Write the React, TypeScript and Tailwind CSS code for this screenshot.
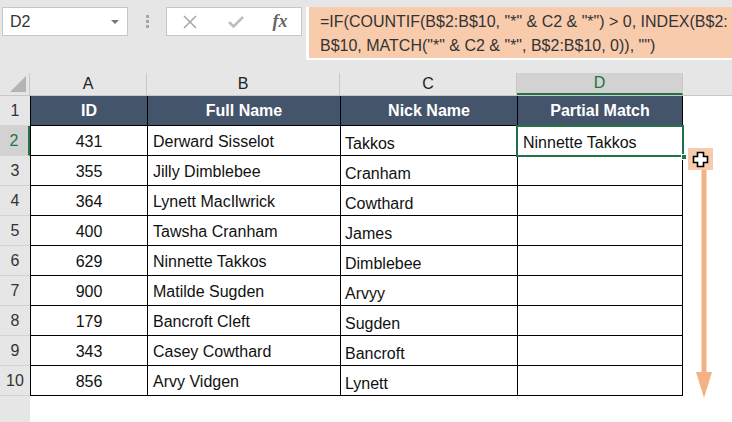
import React from 'react'

// Excel 風のシート。部分一致の数式結果を D 列に表示する
const COLS = [
  { key: 'A', w: 'w-[117px]' },
  { key: 'B', w: 'w-[193px]' },
  { key: 'C', w: 'w-[177px]' },
  { key: 'D', w: 'w-[166px]' },
]

const ROWS: [string, string, string, string][] = [
  ['431', 'Derward Sisselot', 'Takkos', 'Ninnette Takkos'],
  ['355', 'Jilly Dimblebee', 'Cranham', ''],
  ['364', 'Lynett MacIlwrick', 'Cowthard', ''],
  ['400', 'Tawsha Cranham', 'James', ''],
  ['629', 'Ninnette Takkos', 'Dimblebee', ''],
  ['900', 'Matilde Sugden', 'Arvyy', ''],
  ['179', 'Bancroft Cleft', 'Sugden', ''],
  ['343', 'Casey Cowthard', 'Bancroft', ''],
  ['856', 'Arvy Vidgen', 'Lynett', ''],
]

const FONT = "font-['Liberation_Sans','Noto_Sans',sans-serif]"

const FillCursor: React.FC = () => (
  <svg width="17" height="17" viewBox="0 0 17 17">
    <path
      d="M5.5 1.5h6v4h4v6h-4v4h-6v-4h-4v-6h4z"
      fill="#fff"
      stroke="#000"
      strokeWidth="1.6"
    />
  </svg>
)

const DownArrow: React.FC = () => (
  <svg width="18" height="228" viewBox="0 0 18 228">
    <rect x="6.5" y="0" width="5" height="206" fill="#f4b183" />
    <polygon points="1,202 17,202 9,228" fill="#f4b183" />
  </svg>
)

export default function App() {
  return (
    <div className={`relative w-[732px] h-[422px] overflow-hidden bg-[#e6e6e6] text-[#222] ${FONT}`}>
      {/* formula bar */}
      <div className="flex items-start pt-[7px] h-[73px]">
        <div className="ml-[2px] w-[126px] h-[29px] bg-white border border-[#c6c6c6] flex items-center justify-between pl-[7px] pr-[8px]">
          <span className="text-[16px] text-[#333]">D2</span>
          <span className="w-0 h-0 border-l-[4px] border-r-[4px] border-t-[4px] border-l-transparent border-r-transparent border-t-[#777]" />
        </div>
        <div className="w-[38px] h-[29px] flex flex-col items-center justify-center gap-[2px]">
          <span className="w-[3px] h-[3px] bg-[#a6a6a6]" />
          <span className="w-[3px] h-[3px] bg-[#a6a6a6]" />
          <span className="w-[3px] h-[3px] bg-[#a6a6a6]" />
        </div>
        <div className="w-[136px] h-[29px] bg-white border border-[#c6c6c6] flex items-center">
          <span className="w-[46px] flex justify-center">
            <svg width="14" height="14" viewBox="0 0 14 14">
              <path d="M1 1L13 13M13 1L1 13" stroke="#a6a6a6" strokeWidth="1.5" />
            </svg>
          </span>
          <span className="w-[46px] flex justify-center">
            <svg width="16" height="12" viewBox="0 0 16 12">
              <path d="M1 6L5.5 10.5L15 1" stroke="#bdbdbd" strokeWidth="2.6" fill="none" />
            </svg>
          </span>
          <span className="flex-1 text-center text-[18px] italic font-bold text-[#666] font-['Liberation_Serif',serif]">fx</span>
        </div>
        <div className="ml-[4px] flex-1 h-[53px] bg-white pl-[3px] pb-[2px]">
          <div className="h-full bg-[#f8cbad] pl-[11px] pt-[3px] text-[16px] leading-[24px] text-[#333] whitespace-nowrap">
            <div>=IF(COUNTIF(B$2:B$10, "*" &amp; C2 &amp; "*") &gt; 0, INDEX(B$2:</div>
            <div>B$10, MATCH("*" &amp; C2 &amp; "*", B$2:B$10, 0)), "")</div>
          </div>
        </div>
      </div>

      {/* column headers */}
      <div className="flex h-[23px] border-b border-[#c8c8c8]">
        <div className="w-[30px] flex items-end justify-end pr-[3px] pb-[3px] border-r border-[#c8c8c8]">
          <svg width="16" height="16" viewBox="0 0 16 16">
            <polygon points="16,0 16,16 0,16" fill="#b4b4b4" />
          </svg>
        </div>
        {COLS.map(c => (
          <div
            key={c.key}
            className={`${c.w} flex items-center justify-center text-[16px] border-r border-[#c8c8c8] ${
              c.key === 'D' ? 'bg-[#d2d2d2] text-[#217346] border-b-2 border-b-[#217346]' : 'text-[#222]'
            }`}
          >
            {c.key}
          </div>
        ))}
        <div className="flex-1" />
      </div>

      {/* sheet body */}
      <div className="flex flex-col">
        {/* row 1: table header */}
        <div className="flex h-[30px]">
          <div className="w-[30px] flex items-center justify-center text-[16px] text-[#333] border-b border-[#d4d4d4]">1</div>
          <div className="flex bg-[#44546a] text-white font-bold text-[16px] border-b border-black">
            {['ID', 'Full Name', 'Nick Name', 'Partial Match'].map((h, i) => (
              <div
                key={h}
                className={`${COLS[i].w} flex items-center justify-center border-l border-black ${i === 3 ? 'border-r' : ''}`}
              >
                {h}
              </div>
            ))}
          </div>
          <div className="flex-1 bg-white" />
        </div>

        {ROWS.map((r, idx) => {
          const n = idx + 2
          const active = n === 2
          return (
            <div key={n} className="flex h-[30px]">
              <div
                className={`w-[30px] flex items-center justify-center text-[16px] border-b border-[#d4d4d4] ${
                  active ? 'bg-[#d2d2d2] text-[#217346] border-r-2 border-r-[#217346]' : 'text-[#333]'
                }`}
              >
                {n}
              </div>
              <div className="flex bg-white text-[16px] text-[#111] border-b border-black">
                <div className={`${COLS[0].w} flex items-center justify-center pt-[3px] border-l border-black`}>{r[0]}</div>
                <div className={`${COLS[1].w} flex items-center pl-[5px] pt-[2px] border-l border-black`}>{r[1]}</div>
                <div className={`${COLS[2].w} flex items-center pl-[4px] pt-[6px] border-l border-black`}>{r[2]}</div>
                <div className={`${COLS[3].w} flex items-center pl-[5px] pt-[4px] border-l border-r border-black`}>{r[3]}</div>
              </div>
              <div className="flex-1 bg-white" />
            </div>
          )
        })}

        <div className="flex h-[40px]">
          <div className="w-[30px]" />
          <div className="flex-1 bg-white" />
        </div>
      </div>

      {/* selection of D2 */}
      <div className="absolute left-[516px] top-[125px] w-[168px] h-[32px] border-2 border-[#217346] pointer-events-none" />
      <div className="absolute left-[681px] top-[154px] w-[6px] h-[6px] bg-[#217346] border border-white" />

      {/* drag cursor and arrow */}
      <div className="absolute left-[688px] top-[148px] w-[25px] h-[22px] bg-[#f8cbad] flex items-center justify-center">
        <FillCursor />
      </div>
      <div className="absolute left-[695px] top-[170px]">
        <DownArrow />
      </div>
    </div>
  )
}
